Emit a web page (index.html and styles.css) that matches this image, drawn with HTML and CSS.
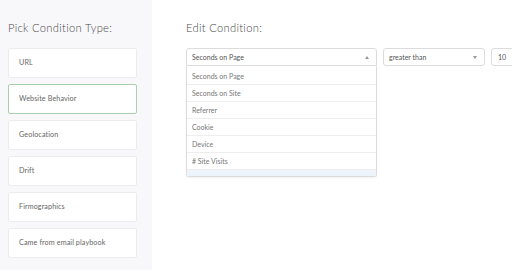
FILE: index.html
```html
<!DOCTYPE html>
<html lang="en">
<head>
    <meta charset="UTF-8">
    <title>Edit Condition</title>
    <link rel="stylesheet" href="styles.css">
</head>
<body>
    <div class="page">
        <div class="sidebar">
            <h2 class="heading">Pick Condition Type:</h2>
            <div class="type-list">
                <div class="type-card">URL</div>
                <div class="type-card active">Website Behavior</div>
                <div class="type-card">Geolocation</div>
                <div class="type-card">Drift</div>
                <div class="type-card">Firmographics</div>
                <div class="type-card">Came from email playbook</div>
            </div>
        </div>
        <div class="editor">
            <h2 class="heading">Edit Condition:</h2>
            <div class="row">
                <div class="select-wrap">
                    <div class="select open">
                        <span>Seconds on Page</span>
                        <span class="caret up"></span>
                    </div>
                    <ul class="menu">
                        <li>Seconds on Page</li>
                        <li>Seconds on Site</li>
                        <li>Referrer</li>
                        <li>Cookie</li>
                        <li>Device</li>
                        <li># Site Visits</li>
                        <li class="hover"></li>
                    </ul>
                </div>
                <div class="select op">
                    <span>greater than</span>
                    <span class="caret"></span>
                </div>
                <div class="value">10</div>
            </div>
        </div>
    </div>
</body>
</html>
```

FILE: styles.css
```css
body { margin: 0; font-family: 'Lato', 'Open Sans', Arial, sans-serif; background: #fff; color: #555; }
.page { display: flex; height: 270px; overflow: hidden; }
.sidebar { width: 144px; flex: none; background: #f8f8fa; padding: 0 0 0 8px; }
.editor { flex: 1; padding-left: 34px; overflow: hidden; }
.heading { font-size: 11.2px; font-weight: 300; color: #4a4a4a; margin: 20px 0 13px; letter-spacing: 0.3px; line-height: 15px; }
.type-list { display: flex; flex-direction: column; gap: 6px; width: 129px; }
.type-card { height: 28px; line-height: 28px; background: #fff; border: 1px solid #ececee; border-radius: 2px; padding-left: 10px; font-size: 7.2px; color: #666; letter-spacing: 0.1px; }
.type-card.active { border-color: #a9cfae; }
.row { display: flex; align-items: flex-start; gap: 6px; }
.select-wrap { position: relative; width: 191px; flex: none; }
.select { height: 16px; line-height: 16px; border: 1px solid #dcdcdf; border-radius: 3px; padding: 0 7px 0 5px; font-size: 7px; color: #555; display: flex; justify-content: space-between; align-items: center; background: #fff; }
.select.open { border-radius: 3px 3px 0 0; }
.select.op { width: 88px; flex: none; }
.caret { width: 0; height: 0; border-left: 2.5px solid transparent; border-right: 2.5px solid transparent; border-top: 3px solid #999; }
.caret.up { border-top: 0; border-bottom: 3px solid #999; }
.menu { list-style: none; margin: 0; padding: 2px 0 0; border: 1px solid #dcdcdf; border-top: 0; border-radius: 0 0 3px 3px; background: #fff; box-shadow: 0 1px 2px rgba(0,0,0,0.06); }
.menu li { height: 16px; line-height: 16px; border-bottom: 1px solid #eeeef0; padding-left: 5px; font-size: 7px; color: #777; }
.menu li.hover { height: 6px; background: #eef4fb; border-bottom: 0; }
.value { width: 30px; height: 16px; line-height: 16px; border: 1px solid #dcdcdf; border-radius: 3px; padding-left: 6px; font-size: 7px; color: #555; flex: none; }
```
